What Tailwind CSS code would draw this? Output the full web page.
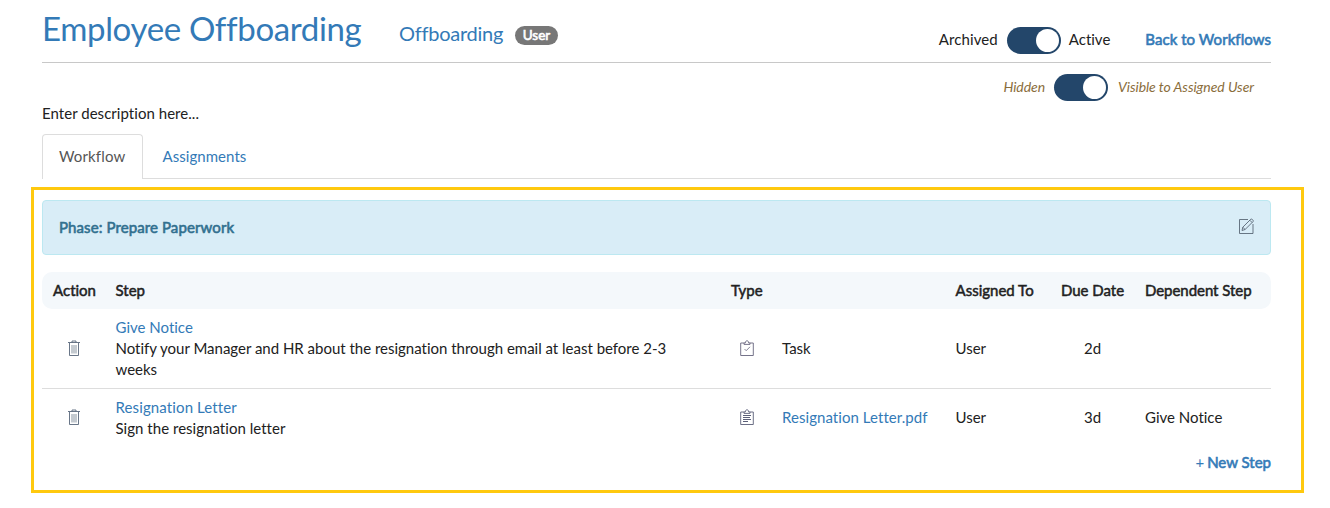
<!DOCTYPE html>
<html lang="en">
<head>
<meta charset="utf-8">
<title>Employee Offboarding</title>
<script src="https://cdn.jsdelivr.net/npm/@tailwindcss/browser@4"></script>
</head>
<body class="h-[508px] overflow-hidden bg-white font-['Lato',sans-serif] text-[15px] leading-[21px] text-[#212121] [font-variant-ligatures:no-common-ligatures]">
<svg class="hidden">
  <symbol id="trash" viewBox="0 0 12 16"><path d="M0 2.500h12M4 2.500V1h4v1.500M1.500 3v12.500h9V3" fill="none" stroke="currentColor" stroke-width=".9"/><path d="M4 5v8.500M6 5v8.500M8 5v8.500" fill="none" stroke="currentColor" stroke-width=".7"/></symbol>
  <symbol id="board" viewBox="0 0 14 16"><path d="M4 3H.7v12.500h12.600V3H10M4 4.400V2.900h1.400C5.400 1.500 6 .8 7 .8s1.600.7 1.600 2.100H10v1.500z" fill="none" stroke="currentColor" stroke-width=".9"/></symbol>
</svg>
<main class="flex h-full flex-col pl-[42px] pr-[59px]">
  <header class="flex h-[63px] shrink-0 border-b border-[#c8c8c8]">
    <h1 class="w-[319px] whitespace-nowrap pt-2 text-[33px] leading-[40px] tracking-[-0.35px] text-[#337ab7]">Employee Offboarding</h1>
    <a class="ml-[38px] w-[104px] pt-[21px] text-[20px] leading-[24px] tracking-[-0.25px] text-[#337ab7]">Offboarding</a>
    <span class="ml-3 mt-[26px] h-[19px] w-[43px] rounded-full bg-[#777] text-center text-[13.500px] leading-[19px] text-white [-webkit-text-stroke:0.6px]">User</span>
    <div class="ml-auto flex h-[54px] items-end">
      <span class="mb-1 tracking-[0.1px]">Archived</span>
      <span class="ml-[9px] flex h-[27px] w-[54px] items-center justify-end rounded-full bg-[#23466a] pr-[2px]"><i class="size-[23px] rounded-full bg-white"></i></span>
      <span class="mb-1 ml-2">Active</span>
      <a class="mb-1 ml-[35px] tracking-[0.05px] text-[#337ab7] [-webkit-text-stroke:0.6px] [font-variant-ligatures:normal]">Back to Workflows</a>
    </div>
  </header>
  <div class="mr-[17px] mt-[11px] flex h-[27px] shrink-0 items-center justify-end text-[14px] italic tracking-[-0.06px] text-[#8a6d3b]">
    <span class="mb-[2px]">Hidden</span>
    <span class="ml-[9px] mr-[10px] flex h-[27px] w-[54px] items-center justify-end rounded-full bg-[#23466a] pr-[2px]"><i class="size-[23px] rounded-full bg-white"></i></span>
    <span class="mb-[2px]">Visible to Assigned User</span>
  </div>
  <p class="mt-[2px] shrink-0 tracking-[0.04px]">Enter description here...</p>
  <nav class="mt-[10px] flex h-[45px] shrink-0 border-b border-[#ddd]">
    <a class="h-[45px] w-[101px] rounded-t border border-b-0 border-[#ddd] bg-white pl-4 pt-[11px] tracking-[0.15px] text-[#555] [font-variant-ligatures:normal]">Workflow</a>
    <a class="pl-[19.500px] pt-3 tracking-[0.05px] text-[#337ab7]">Assignments</a>
  </nav>
  <section class="-ml-[11px] -mr-[33px] mt-2 h-[306px] shrink-0 border-[3px] border-[#ffc90e] pl-2 pr-[30px] pt-[10px]">
    <div class="flex h-[55px] items-center justify-between rounded border border-[#bce8f1] bg-[#d9edf7] px-4 text-[#31708f]">
      <span class="tracking-[0.1px] [-webkit-text-stroke:0.6px]">Phase: Prepare Paperwork</span>
      <svg class="mb-[3px] size-4 text-[#53606f]" viewBox="0 0 16 16" fill="none" stroke="currentColor"><path d="M10 1.500H1.500v14h13.500V6M4 12.500l.8-3.300 8-8c.9-.8 3.100 1.300 2.300 2.300l-8 8zM4.800 9.200l2.300 2.300M11.800 2.200l2.300 2.300" stroke-width=".85"/></svg>
    </div>
    <div class="mt-[17px] grid h-[37px] grid-cols-[65px_616px_224px_101px_89px_134px] items-center rounded-[10px] bg-[#f4f8fb] [-webkit-text-stroke:0.500px]">
      <span class="text-center">Action</span><span class="pl-[8.500px]">Step</span><span class="pl-2">Type</span><span class="pl-[8.500px]">Assigned To</span><span class="text-center">Due Date</span><span class="pl-2 tracking-[-0.05px]">Dependent Step</span>
    </div>
    <div class="grid h-20 grid-cols-[65px_616px_51px_173px_101px_89px_134px] items-center border-b border-[#ddd]">
      <svg class="mb-[2px] ml-[26px] h-4 w-3 text-[#58677a]"><use href="#trash"/></svg>
      <div class="pl-[8.500px] pr-6"><a class="text-[#337ab7]">Give Notice</a><p class="tracking-[-0.01px]">Notify your Manager and HR about the resignation through email at least before 2-3 weeks</p></div>
      <svg class="mb-[2px] ml-[17px] h-4 w-[14px] text-[#66647e]" viewBox="0 0 14 16"><use href="#board"/><path d="m4.500 9 1.700 1.700L10 6.800" fill="none" stroke="currentColor" stroke-width=".8"/></svg>
      <span class="pl-2">Task</span><span class="pl-[8.500px]">User</span><span class="text-center">2d</span><span></span>
    </div>
    <div class="grid h-[58px] grid-cols-[65px_616px_51px_173px_101px_89px_134px] items-center">
      <svg class="mb-[2px] ml-[26px] h-4 w-3 text-[#58677a]"><use href="#trash"/></svg>
      <div class="pl-[8.500px]"><a class="tracking-[0.12px] text-[#337ab7]">Resignation Letter</a><p class="tracking-[0.03px]">Sign the resignation letter</p></div>
      <svg class="mb-[2px] ml-[17px] h-4 w-[14px] text-[#5b5f78]" viewBox="0 0 14 16"><use href="#board"/><path d="M3 6.500h8M3 8.500h7M3 10.500h8M3 12.500h5" fill="none" stroke="currentColor"/></svg>
      <a class="mb-px pl-2 tracking-[0.06px] text-[#337ab7]">Resignation Letter.pdf</a><span class="mb-px pl-[8.500px]">User</span><span class="mb-px text-center">3d</span><span class="mb-px pl-2">Give Notice</span>
    </div>
    <div class="mt-[5px] text-right text-[#337ab7]"><span class="mr-[3px]">+</span><span class="[-webkit-text-stroke:0.6px]">New Step</span></div>
  </section>
</main>
</body>
</html>
